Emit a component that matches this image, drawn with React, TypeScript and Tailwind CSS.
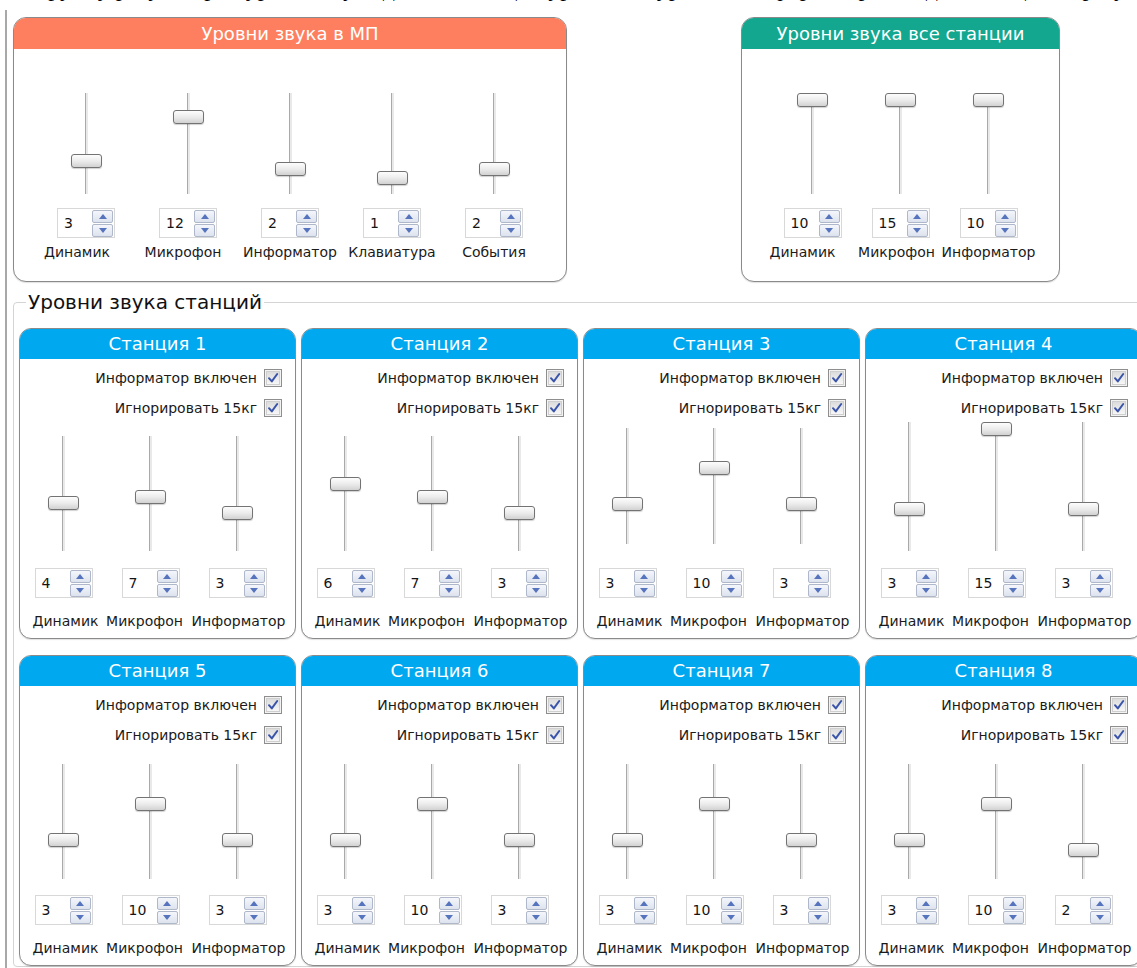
import React from 'react';

type Sl = { label: string; v: number; c: number; sh?: string };

function Track({ t0, t1, c }: { t0: number; t1: number; c: number }) {
  return (
    <div className="relative w-[33px] h-full">
      <div
        className="absolute left-[15px] w-[3px] border-l border-[#a9a9a9] bg-[#e9e9e9]"
        style={{ top: t0, height: t1 - t0 }}
      />
      <div
        className="absolute left-[1px] w-[31px] h-[14px] rounded-[3px] border border-[#737373] bg-gradient-to-b from-[#fdfdfd] via-[#ececec] to-[#d2d2d2] shadow-[0_1px_1px_rgba(0,0,0,0.18)]"
        style={{ top: c - 7 }}
      />
    </div>
  );
}

function Spin({ v }: { v: number }) {
  return (
    <div className="w-[58px] h-[30px] bg-white border border-[#d8d8d8] flex items-center pl-[6px] pr-[1px]">
      <span className="flex-1 text-[14px] leading-none text-[#141414]">{v}</span>
      <div className="flex flex-col gap-[1px] w-[21px]">
        <div className="h-[13px] rounded-[2px] border border-[#aeb8ca] bg-gradient-to-b from-[#f4f6fb] to-[#dde3ee] flex items-center justify-center">
          <svg width="8" height="5" viewBox="0 0 8 5">
            <path d="M0 5L4 0L8 5Z" fill="#5673bd" />
          </svg>
        </div>
        <div className="h-[13px] rounded-[2px] border border-[#aeb8ca] bg-gradient-to-b from-[#f4f6fb] to-[#dde3ee] flex items-center justify-center">
          <svg width="8" height="5" viewBox="0 0 8 5">
            <path d="M0 0L4 5L8 0Z" fill="#5673bd" />
          </svg>
        </div>
      </div>
    </div>
  );
}

function Check() {
  return (
    <div className="w-[18px] h-[18px] border border-[#8e8e8e] bg-[#f3f3f3] p-[1px]">
      <div className="w-full h-full border border-[#cfcfcf] bg-gradient-to-b from-[#dcdcdc] to-[#f7f7f7] flex items-center justify-center">
        <svg viewBox="0 0 12 12" className="w-[12px] h-[12px]">
          <path d="M2 6.2 L4.8 9.4 L10.2 2" stroke="#3a54aa" strokeWidth="2" fill="none" strokeLinecap="round" strokeLinejoin="round" />
        </svg>
      </div>
    </div>
  );
}

const topLeft: Sl[] = [
  { label: 'Динамик', v: 3, c: 112, sh: '-translate-x-[9px]' },
  { label: 'Микрофон', v: 12, c: 68, sh: '-translate-x-[5px]' },
  { label: 'Информатор', v: 2, c: 120 },
  { label: 'Клавиатура', v: 1, c: 129 },
  { label: 'События', v: 2, c: 120 },
];

const topRight: Sl[] = [
  { label: 'Динамик', v: 10, c: 51, sh: '-translate-x-[10px]' },
  { label: 'Микрофон', v: 15, c: 51, sh: '-translate-x-[4px]' },
  { label: 'Информатор', v: 10, c: 51 },
];

type St = { name: string; t0: number; t1: number; s: Sl[] };

const mk = (d: number, dc: number, m: number, mc: number, i: number, ic: number): Sl[] => [
  { label: 'Динамик', v: d, c: dc, sh: 'translate-x-[2px]' },
  { label: 'Микрофон', v: m, c: mc, sh: '-translate-x-[6px]' },
  { label: 'Информатор', v: i, c: ic, sh: 'translate-x-[1px]' },
];

const stations: St[] = [
  { name: 'Станция 1', t0: 16, t1: 131, s: mk(4, 83, 7, 77, 3, 93) },
  { name: 'Станция 2', t0: 16, t1: 131, s: mk(6, 64, 7, 77, 3, 93) },
  { name: 'Станция 3', t0: 8, t1: 124, s: mk(3, 84, 10, 48, 3, 84) },
  { name: 'Станция 4', t0: 2, t1: 131, s: mk(3, 89, 15, 9, 3, 89) },
  { name: 'Станция 5', t0: 17, t1: 132, s: mk(3, 93, 10, 57, 3, 93) },
  { name: 'Станция 6', t0: 17, t1: 132, s: mk(3, 93, 10, 57, 3, 93) },
  { name: 'Станция 7', t0: 17, t1: 132, s: mk(3, 93, 10, 57, 3, 93) },
  { name: 'Станция 8', t0: 17, t1: 132, s: mk(3, 93, 10, 57, 2, 103) },
];

function TopPanel({
  title,
  color,
  items,
  colW,
  className,
}: {
  title: string;
  color: string;
  items: Sl[];
  colW: string;
  className: string;
}) {
  return (
    <div className={`h-[265px] rounded-[13px] border border-[#8a8a8a] overflow-hidden flex flex-col bg-white shadow-[0_1px_1px_rgba(0,0,0,0.12)] ${className}`}>
      <div className={`-mx-px -mt-px h-[32px] shrink-0 flex items-center justify-center text-white text-[18px] ${color}`}>
        {title}
      </div>
      <div className="flex justify-center">
        {items.map((it, k) => (
          <div key={k} className={`flex flex-col items-center ${colW}`}>
            <div className="h-[159px]">
              <Track t0={44} t1={145} c={it.c} />
            </div>
            <Spin v={it.v} />
            <div className={`mt-[5px] h-[18px] text-[14px] leading-[18px] text-[#1b1b1b] whitespace-nowrap ${it.sh ?? ''}`}>{it.label}</div>
          </div>
        ))}
      </div>
    </div>
  );
}

function Station({ st }: { st: St }) {
  return (
    <div className="w-[277px] h-[311px] rounded-[12px] border border-[#8a8a8a] overflow-hidden flex flex-col bg-white shadow-[0_1px_1px_rgba(0,0,0,0.12)]">
      <div className="-mx-px -mt-px h-[31px] shrink-0 bg-[#00a8ef] flex items-center justify-center text-white text-[18px]">
        {st.name}
      </div>
      <div className="pt-[7px] pr-[13px] flex flex-col items-end gap-[6px]">
        <div className="h-[24px] flex items-center gap-[7px]">
          <span className="text-[14px] text-[#1b1b1b]">Информатор включен</span>
          <Check />
        </div>
        <div className="h-[24px] flex items-center gap-[7px]">
          <span className="text-[14px] text-[#1b1b1b]">Игнорировать 15кг</span>
          <Check />
        </div>
      </div>
      <div className="grid grid-cols-[87px_87px_87px]">
        {st.s.map((it, k) => (
          <div key={k} className="flex flex-col items-center">
            <div className="h-[148px]">
              <Track t0={st.t0} t1={st.t1} c={it.c} />
            </div>
            <Spin v={it.v} />
            <div className={`mt-[14px] h-[18px] text-[14px] leading-[18px] text-[#1b1b1b] whitespace-nowrap ${it.sh ?? ''}`}>{it.label}</div>
          </div>
        ))}
      </div>
    </div>
  );
}

export default function App() {
  return (
    <div className="w-[1137px] h-[968px] overflow-hidden bg-white font-['DejaVu_Sans',sans-serif]">
      <div className="h-[10px] overflow-hidden pl-[36px]">
        <div className="-mt-[24px] text-[24px] leading-[24px] text-black whitespace-nowrap font-['Liberation_Serif',serif]">
          Группу регуляторов уровня звука для МП, общих уровней и уровней информатора каждой станции образуют три раздела формы
        </div>
      </div>
      <div className="ml-[5px] border-l-2 border-[#a8a8a8] pl-[6px] pt-[7px] h-[958px]">
        <div className="flex">
          <TopPanel title="Уровни звука в МП" color="bg-[#fd7f5f]" items={topLeft} colW="w-[102px]" className="w-[554px]" />
          <TopPanel title="Уровни звука все станции" color="bg-[#13a78f]" items={topRight} colW="w-[88px]" className="w-[319px] ml-[174px]" />
        </div>
        <fieldset className="mt-[7px] border border-[#d4d4d4] rounded-[4px] pl-[5px] pt-[13px] w-[1200px]">
          <legend className="ml-[7px] px-[2px] text-[20px] leading-[26px] text-[#111]">Уровни звука станций</legend>
          <div className="grid grid-cols-[277px_277px_277px_277px] gap-x-[5px] gap-y-[16px]">
            {stations.map((st) => (
              <Station key={st.name} st={st} />
            ))}
          </div>
        </fieldset>
      </div>
    </div>
  );
}
